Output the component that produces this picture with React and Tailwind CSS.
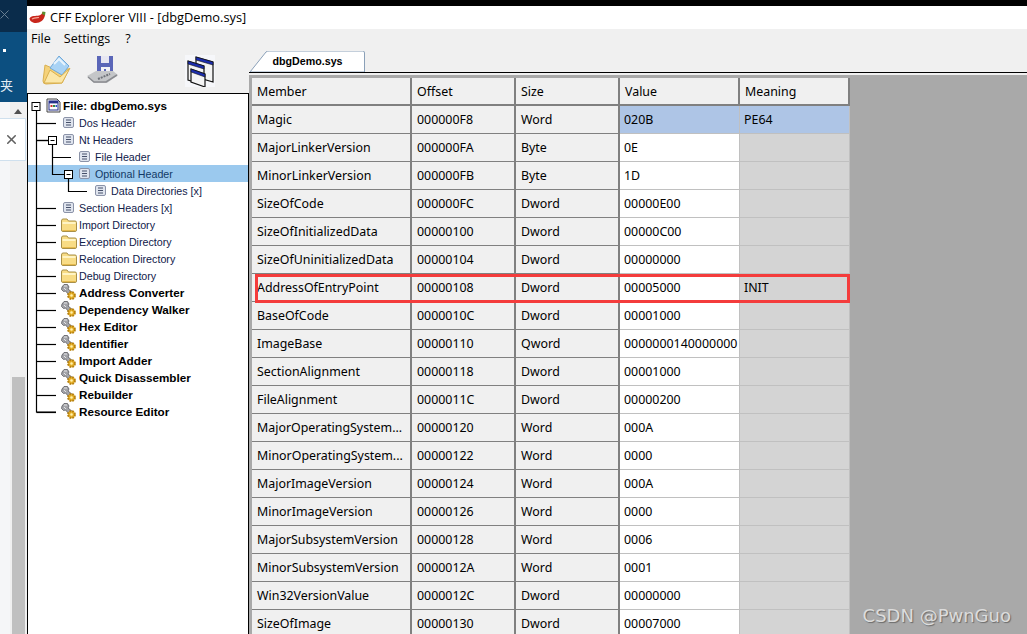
import { X } from 'lucide-react'

const rows = [
  ['Magic', '000000F8', 'Word', '020B', 'PE64'],
  ['MajorLinkerVersion', '000000FA', 'Byte', '0E', ''],
  ['MinorLinkerVersion', '000000FB', 'Byte', '1D', ''],
  ['SizeOfCode', '000000FC', 'Dword', '00000E00', ''],
  ['SizeOfInitializedData', '00000100', 'Dword', '00000C00', ''],
  ['SizeOfUninitializedData', '00000104', 'Dword', '00000000', ''],
  ['AddressOfEntryPoint', '00000108', 'Dword', '00005000', 'INIT'],
  ['BaseOfCode', '0000010C', 'Dword', '00001000', ''],
  ['ImageBase', '00000110', 'Qword', '0000000140000000', ''],
  ['SectionAlignment', '00000118', 'Dword', '00001000', ''],
  ['FileAlignment', '0000011C', 'Dword', '00000200', ''],
  ['MajorOperatingSystem...', '00000120', 'Word', '000A', ''],
  ['MinorOperatingSystem...', '00000122', 'Word', '0000', ''],
  ['MajorImageVersion', '00000124', 'Word', '000A', ''],
  ['MinorImageVersion', '00000126', 'Word', '0000', ''],
  ['MajorSubsystemVersion', '00000128', 'Word', '0006', ''],
  ['MinorSubsystemVersion', '0000012A', 'Word', '0001', ''],
  ['Win32VersionValue', '0000012C', 'Dword', '00000000', ''],
  ['SizeOfImage', '00000130', 'Dword', '00007000', ''],
]

const tree = [
  { label: 'Dos Header', icon: 'list', pad: 'pl-[35px]' },
  { label: 'Nt Headers', icon: 'list', pad: 'pl-[35px]' },
  { label: 'File Header', icon: 'list', pad: 'pl-[51px]' },
  { label: 'Optional Header', icon: 'list', pad: 'pl-[51px]', selected: true },
  { label: 'Data Directories [x]', icon: 'list', pad: 'pl-[67px]' },
  { label: 'Section Headers [x]', icon: 'list', pad: 'pl-[35px]' },
  { label: 'Import Directory', icon: 'folder', pad: 'pl-[33px]' },
  { label: 'Exception Directory', icon: 'folder', pad: 'pl-[33px]' },
  { label: 'Relocation Directory', icon: 'folder', pad: 'pl-[33px]' },
  { label: 'Debug Directory', icon: 'folder', pad: 'pl-[33px]' },
  { label: 'Address Converter', icon: 'gear', pad: 'pl-[33px]' },
  { label: 'Dependency Walker', icon: 'gear', pad: 'pl-[33px]' },
  { label: 'Hex Editor', icon: 'gear', pad: 'pl-[33px]' },
  { label: 'Identifier', icon: 'gear', pad: 'pl-[33px]' },
  { label: 'Import Adder', icon: 'gear', pad: 'pl-[33px]' },
  { label: 'Quick Disassembler', icon: 'gear', pad: 'pl-[33px]' },
  { label: 'Rebuilder', icon: 'gear', pad: 'pl-[33px]' },
  { label: 'Resource Editor', icon: 'gear', pad: 'pl-[33px]' },
]

function Chili() {
  return (
    <svg width="17" height="13" viewBox="0 0 17 13" className="shrink-0">
      <path d="M0.5 7.5 C2 4.5 7 5 10 4.5 C12 4 13 3 13.5 1 L16 2 C16.5 6 14 10 10 11.5 C6 12.8 1 11.5 0.5 7.5Z" fill="#c8261c" />
      <path d="M13 3 L13.5 0.5 L16.5 1 L16 4.5Z" fill="#5c8f30" />
      <path d="M3 8 C5 6.8 7 6.8 10 6.5" stroke="#f5a596" fill="none" strokeWidth="1.2" />
    </svg>
  )
}

function OpenIcon() {
  return (
    <svg width="29" height="30" viewBox="0 0 29 30" className="ml-[15px] mt-[6px] shrink-0">
      <path d="M3 10 L1 26 Q1 29 4 29 L20 28 L27 14 L10 13Z" fill="#f5d27a" stroke="#d9b050" />
      <path d="M8 13 L17 1 L27 11 L20 20Z" fill="#a9d3f5" stroke="#6fa8d8" />
      <path d="M12 9 L17 4 L23 10" fill="none" stroke="#e8f4fd" strokeWidth="2" />
      <path d="M2 28 L8 15 L18 22 L28 13 L20 28Z" fill="#fbe7a8" stroke="#d9b050" />
    </svg>
  )
}

function FloppyIcon() {
  return (
    <svg width="31" height="28" viewBox="0 0 31 28" className="ml-[16px] mt-[7px] shrink-0">
      <path d="M10 0 H26 V18 H10Z" fill="#5a66b8" />
      <path d="M14 0 H22 V7 H14Z" fill="#e6e6f2" />
      <path d="M14 11 H23 V18 H14Z" fill="#f2f2f6" />
      <path d="M17 13 H19 V18 H17Z" fill="#5a66b8" />
      <path d="M0 20 L9 15 H26 L31 19 L20 27 H7Z" fill="#c4c6c8" />
      <path d="M1 21 L7 26 H19 L30 19" fill="none" stroke="#8a8c90" strokeWidth="1.5" />
      <path d="M11 23 L23 18" stroke="#70747a" strokeWidth="2" strokeDasharray="2 1" />
    </svg>
  )
}

function WindowsIcon() {
  const win = (x, y, w, h) => (
    <g>
      <path d={`M${x} ${y} L${x + w} ${y + 5} V${y + h + 5} L${x} ${y + h}Z`} fill="#f4f4f4" stroke="#111" strokeWidth="1.2" />
      <path d={`M${x} ${y} L${x + w} ${y + 5} V${y + 8} L${x} ${y + 3}Z`} fill="#1c2db0" stroke="#111" strokeWidth="0.6" />
    </g>
  )
  return (
    <div className="ml-[67px] mt-[6px] shrink-0 bg-[#f6f7fa]">
      <svg width="30" height="32" viewBox="0 0 30 32" className="block">
        {win(11, 2, 17, 20)}
        {win(3, 6, 16, 19)}
        {win(6, 14, 14, 13)}
      </svg>
    </div>
  )
}

function ListIcon() {
  return (
    <svg width="11" height="11" viewBox="0 0 11 11" className="shrink-0">
      <rect x="0.5" y="0.5" width="10" height="10" rx="1.5" fill="#dfe4ee" stroke="#8b93a8" />
      <path d="M3 3 H8 M3 5.5 H8 M3 8 H8" stroke="#46506a" strokeWidth="1" />
    </svg>
  )
}

function FolderIcon() {
  return (
    <svg width="16" height="14" viewBox="0 0 16 14" className="shrink-0">
      <path d="M0.5 3 Q0.5 1 2 1 H6 L7.5 3 H14 Q15.5 3 15.5 4.5 V12 Q15.5 13.5 14 13.5 H2 Q0.5 13.5 0.5 12Z" fill="#f8dc85" stroke="#a89048" />
      <path d="M1.5 5 H14.5" stroke="#fff4c4" strokeWidth="2" />
      <path d="M1.5 12.5 H14.5" stroke="#e6b94c" />
    </svg>
  )
}

function GearIcon() {
  return (
    <svg width="16" height="17" viewBox="0 0 16 17" className="shrink-0">
      <path d="M1 3 L3 0.5 L6.5 0.5 L8 3 L7 5 L12 9 L9 12 L4.5 7 L2.5 7.5 L0.5 5.5Z" fill="#a2a3a8" stroke="#5a5b60" strokeWidth="0.8" />
      <path d="M3 2 L6 2 M3 4 L5 6" stroke="#e4e4e6" />
      <circle cx="10.5" cy="11.5" r="3.4" fill="#eab52e" stroke="#b8820f" strokeWidth="2" strokeDasharray="1.8 0.9" />
      <circle cx="10.5" cy="11.5" r="1.2" fill="#fff2b0" />
    </svg>
  )
}

function FileIcon() {
  return (
    <svg width="15" height="15" viewBox="0 0 15 15" className="shrink-0">
      <path d="M1 1 H11 L14 4 V14 H1Z" fill="#f4f4f8" stroke="#444" />
      <rect x="3" y="3" width="9" height="9" fill="#fff" stroke="#27308a" />
      <rect x="3" y="3" width="9" height="2.4" fill="#27308a" />
      <rect x="4.5" y="7" width="2" height="2" fill="#cc3030" />
      <rect x="7" y="7" width="2" height="2" fill="#2e8a3e" />
      <rect x="9.5" y="7" width="1.6" height="2" fill="#2a50c8" />
    </svg>
  )
}

const icons = { list: ListIcon, folder: FolderIcon, gear: GearIcon }

// connector lines and +/- boxes of the tree, relative to the tree panel
function TreeLines() {
  const branch = [29, 46, 114, 131, 148, 165, 182, 199, 216, 233, 250, 267, 284, 301, 318]
  const box = (x, y) => (
    <g>
      <rect x={x} y={y} width="8" height="8" fill="#fff" stroke="#000" />
      <path d={`M${x + 2} ${y + 4} H${x + 6}`} stroke="#000" />
    </g>
  )
  return (
    <svg width="90" height="330" viewBox="0 0 90 330" className="absolute left-0 top-0">
      <g stroke="#000" strokeWidth="1.2" fill="none">
        <path d="M8.5 12 V318 H28" />
        {branch.map((y) => (
          <path key={y} d={`M8.5 ${y + 0.5} H28`} />
        ))}
        <path d="M8.5 46.5 H20" />
        <path d="M24.5 50 V80.5 H36 M24.5 63.5 H43" />
        <path d="M40.5 84 V97.5 H59" />
      </g>
      {box(4, 8.5)}
      {box(20.5, 42.5)}
      {box(36.5, 76.5)}
    </svg>
  )
}

function Cell({ children, className }) {
  return (
    <div className={`h-[28px] pt-[2px] border-r border-b flex items-center overflow-hidden whitespace-nowrap ${className}`}>
      {children}
    </div>
  )
}

export default function App() {
  return (
    <div className="w-[1027px] h-[634px] overflow-hidden flex bg-[#f0f0f0] font-['Open_Sans',sans-serif] text-black">
      {/* other window peeking in on the left */}
      <div className="w-[27px] h-full shrink-0 flex flex-col relative overflow-hidden bg-[#f5f6f8]">
        <div className="h-[32px] bg-[#0a2c4b] pt-[7px]">
          <X size={15} className="text-[#6f8598] -ml-[3px]" strokeWidth={1.5} />
        </div>
        <div className="h-[70px] bg-[#0c4f80] flex flex-col text-[#e6eef5]">
          <div className="w-[3px] h-[3px] bg-white ml-[3px] mt-[17px]" />
          <span className="text-[13px] leading-none mt-[26px] font-['Noto_Sans_CJK_SC',sans-serif]">夹</span>
        </div>
        <div className="flex-1 flex">
          <div className="w-[10px] shrink-0" />
          <div className="w-[17px] flex flex-col items-center bg-[#f0f0f0]">
            <div className="mt-[7px] w-0 h-0 border-x-[4px] border-x-transparent border-b-[5px] border-b-[#505050] -ml-[1px]" />
            <div className="mt-[263px] w-[13px] flex-1 bg-[#c0c0c0] -ml-[1px]" />
          </div>
        </div>
        <div className="absolute left-0 top-[118px] w-[26px] h-[43px] bg-white border border-l-0 border-[#cfe0ee] flex items-center justify-end pr-[6px]">
          <X size={15} className="text-[#606060]" strokeWidth={2.5} />
        </div>
      </div>

      <div className="flex-1 flex flex-col min-w-0">
        <div className="h-[6px] bg-black shrink-0" />
        <div className="h-[23px] bg-white flex items-center pl-[2px] gap-[4px] text-[12.8px] shrink-0">
          <Chili />
          <span>CFF Explorer VIII - [dbgDemo.sys]</span>
        </div>
        <div className="h-[20px] flex items-center text-[12.5px] pl-[4px] gap-[13px] shrink-0">
          <span>File</span>
          <span>Settings</span>
          <span className="ml-[2px]">?</span>
        </div>

        <div className="flex-1 flex min-h-0">
          {/* toolbar + tree */}
          <div className="w-[222px] shrink-0 flex flex-col">
            <div className="h-[44px] flex items-start shrink-0">
              <OpenIcon />
              <FloppyIcon />
              <WindowsIcon />
            </div>
            <div className="flex-1 bg-white border-t border-x border-black relative pt-[3px] font-['Liberation_Sans',sans-serif] text-[10.7px]">
              <div className="h-[17px] flex items-center pl-[18px] gap-[2px] font-bold text-[11.7px]">
                <FileIcon />
                <span>File: dbgDemo.sys</span>
              </div>
              {tree.map((item) => {
                const Icon = icons[item.icon]
                return (
                  <div
                    key={item.label}
                    className={`h-[17px] flex items-center gap-[5px] ${item.pad} ${item.selected ? 'bg-[#9bc9ee] text-[#123a66]' : ''}`}
                  >
                    <Icon />
                    <span className={item.icon === 'gear' ? 'font-bold text-[11.7px] ml-[-3px] mt-[1px] text-black' : item.icon === 'folder' ? 'ml-[-3px] mt-[2px] text-[#10204a]' : item.selected ? 'mt-[2px]' : 'mt-[2px] text-[#10204a]'}>
                      {item.label}
                    </span>
                  </div>
                )
              })}
              <TreeLines />
            </div>
          </div>

          {/* tab + member grid */}
          <div className="flex-1 flex flex-col min-w-0">
            <div className="h-[24px] shrink-0 flex items-end pl-[1px] border-b border-black">
              <div className="relative w-[115px] h-[21px] flex items-center justify-center pl-[2px]">
                <svg width="115" height="21" viewBox="0 0 115 21" className="absolute left-0 top-0">
                  <path d="M0 21 L16 1 Q17 0 19 0 H113 Q114.5 0 114.5 2 V21Z" fill="#fff" stroke="#8aa0b8" />
                </svg>
                <span className="relative font-['Liberation_Sans',sans-serif] font-bold text-[10.7px] ml-[-2px]">dbgDemo.sys</span>
              </div>
            </div>
            <div className="flex-1 min-h-0 bg-[#a9a9a9] border-t-2 border-t-[#f0f0f0] pt-[2px] pl-[3px] relative overflow-hidden font-['Noto_Sans',sans-serif] text-[12.4px]">
              <div className="grid grid-cols-[160px_104px_104px_120px_110px] w-[598px] relative mt-[1px]">
                {['Member', 'Offset', 'Size', 'Value', 'Meaning'].map((h) => (
                  <div
                    key={h}
                    className="h-[28px] pl-[5px] pt-[2px] flex items-center bg-[#f0f0f0] border-r-2 border-b-2 border-r-[#808080] border-b-[#808080]"
                  >
                    {h}
                  </div>
                ))}
                {rows.map((r, i) => {
                  const hit = i === 0
                  return [
                    <Cell key={`${r[0]}-m`} className="pl-[5px] bg-[#f0f0f0] border-[#808080] border-r-2">{r[0]}</Cell>,
                    <Cell key={`${r[0]}-o`} className="pl-[5px] bg-[#f0f0f0] border-[#808080] border-r-2">{r[1]}</Cell>,
                    <Cell key={`${r[0]}-s`} className="pl-[5px] bg-[#f0f0f0] border-[#808080] border-r-2">{r[2]}</Cell>,
                    <Cell key={`${r[0]}-v`} className={`pl-[4px] border-[#c0c0c0] ${hit ? 'bg-[#aec5e6]' : 'bg-white'}`}>{r[3]}</Cell>,
                    <Cell key={`${r[0]}-x`} className={`pl-[4px] border-[#c0c0c0] ${hit ? 'bg-[#aec5e6]' : 'bg-[#d4d4d4]'}`}>{r[4]}</Cell>,
                  ]
                })}
                {/* annotation drawn over the screenshot */}
                <div className="absolute left-[3px] top-[196px] w-[595px] h-[29px] border-[3px] border-[#f43c3c]" />
              </div>
              <span className="absolute right-[16px] bottom-[9px] text-[18px] leading-none text-[#dcdcdc] font-['DejaVu_Sans',sans-serif] [text-shadow:1px_1px_1px_#6a6a6a]">CSDN @PwnGuo</span>
            </div>
          </div>
        </div>
      </div>
    </div>
  )
}
